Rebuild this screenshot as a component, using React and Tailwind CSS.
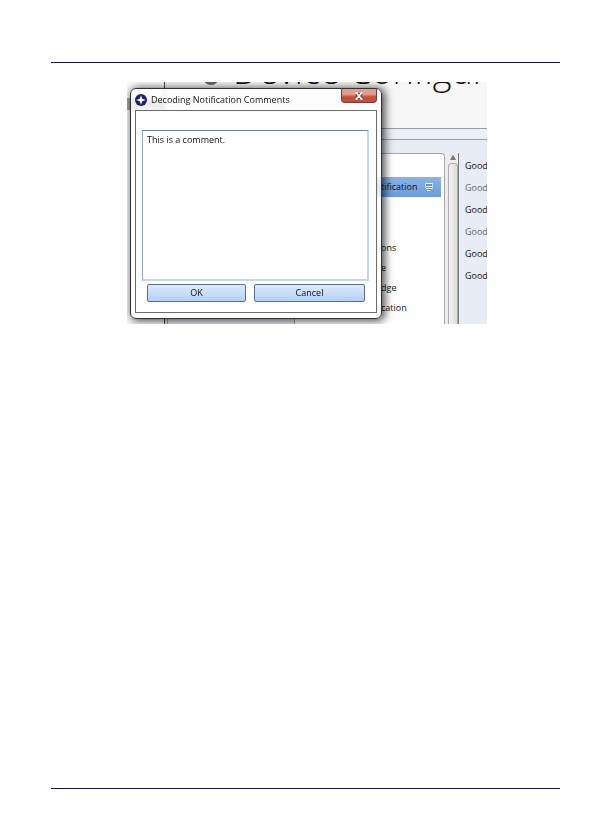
import React, { useState } from 'react';

const menuItems = [
    { head: 'i', tail: 'ons' },
    { head: 'c', tail: 'e' },
    { head: 'i', tail: 'dge' },
    { head: 'fi', tail: 'cation' },
];

const reads = [
    { label: 'Good' },
    { label: 'Good', dim: true },
    { label: 'Good' },
    { label: 'Good', dim: true },
    { label: 'Good' },
    { label: 'Good' },
];

const Emblem = () => (
    <svg viewBox="0 0 12 12" className="size-3 shrink-0" aria-hidden="true">
        <circle cx="6" cy="6" r="6" fill="#1c2268" />
        <path d="M6 1.2 L7.2 4.8 L10.8 6 L7.2 7.2 L6 10.8 L4.8 7.2 L1.2 6 L4.8 4.8 Z" fill="#fff" />
    </svg>
);

const CloseIcon = () => (
    <svg viewBox="0 0 10 8" className="w-[10px] h-2" aria-hidden="true">
        <path d="M2.5 1.5 L7.5 6.5 M7.5 1.5 L2.5 6.5" stroke="#6b3a38" strokeWidth="3.2" />
        <path d="M1.5 1 H3.8 M6.2 1 H8.5 M1.5 7 H3.8 M6.2 7 H8.5 M2.6 1.2 L7.4 6.8 M7.4 1.2 L2.6 6.8" stroke="#fff" strokeWidth="1.5" />
    </svg>
);

const NoteIcon = () => (
    <svg viewBox="0 0 10 8" className="w-[10px] h-2" aria-hidden="true">
        <path d="M1 .5 H9 V5.5 H7.5 V7.5 H3 L1 5.5 Z" fill="#5f93d6" />
        <path d="M1 .5 H9 M2 3.5 H8 M2 5.5 H8 M3 7.5 H6.5" stroke="#f2f8ff" strokeWidth="1" />
        <path d="M1.5 .5 V5 M8.5 .5 V6" stroke="#bcd6f5" strokeWidth="1" />
    </svg>
);

// The application window that sits behind the dialog
const DeviceWindow = () => (
    <div className="flex h-full">
        <div className="w-[37px] shrink-0 bg-[#fafafa] pt-4">
            <div className="h-3 bg-[#a5a5a5]" />
        </div>
        <div className="flex-1 min-w-0 flex flex-col border-l border-[#444] bg-[#e8ecf4]">
            <header className="h-[47px] shrink-0 bg-[#f6f6f6] border-b border-[#9a9da3]">
                <div className="flex -mt-[29px] pl-[38px] gap-[14px] whitespace-nowrap">
                    <div className="size-4 shrink-0 mt-4 rounded-full bg-[#666]" />
                    <h1 className="text-[36px] leading-9 font-light text-[#111]">Device Configuration</h1>
                </div>
            </header>
            <div className="h-[10px] shrink-0 bg-[#eceff4]" />
            <div className="flex-1 flex ml-[2px] border-t border-l border-[#9a9da3]">
                <div className="w-[126px] shrink-0 mt-[13px]" />
                <nav className="w-[151px] shrink-0 mt-[13px] pt-[23px] pr-[3px] bg-white border-t border-x border-[#a3a6ab] rounded-t">
                    <div className="flex items-center h-5 bg-gradient-to-b from-[#8bb3e6] to-[#6d9cd9]">
                        <span className="w-[86px] text-right">No</span>
                        <span className="flex-1">tification</span>
                        <span className="mr-[7px]"><NoteIcon /></span>
                    </div>
                    <ul className="pt-[41px]">
                        {menuItems.map((item) => (
                            <li key={item.tail} className="flex items-center h-5">
                                <span className="w-[86px] text-right">{item.head}</span>
                                <span>{item.tail}</span>
                            </li>
                        ))}
                    </ul>
                </nav>
                <div className="w-[14px] shrink-0 mt-[13px] flex flex-col bg-[#ededed] border-r border-[#77797d] pl-[3px]">
                    <svg viewBox="0 0 10 10" className="size-[10px]" aria-hidden="true">
                        <path d="M5 1.5 L8 7 H2 Z" fill="#777" />
                    </svg>
                    <div className="flex-1 border-t border-x border-[#aaa] rounded-t-sm bg-gradient-to-r from-[#f4f4f4] to-[#dcdcdc]" />
                </div>
                <ul className="flex-1 min-w-0 mt-[15px] pl-[6px] overflow-hidden">
                    {reads.map((read, i) => (
                        <li key={i} className={`h-[22px] leading-[22px] ${read.dim ? 'text-[#666]' : 'text-[#111]'}`}>
                            {read.label}
                        </li>
                    ))}
                </ul>
            </div>
        </div>
    </div>
);

const buttonStyle = 'h-[18px] flex items-center justify-center rounded-xs border border-[#5d6f90] bg-linear-to-b from-[#dbe9fb] via-[#c9def8] via-50% to-[#b3cff4]';

const CommentDialog = () => {
    const [comment, setComment] = useState('This is a comment.');

    return (
        <div
            role="dialog"
            aria-labelledby="dialog-title"
            className="absolute left-[3px] top-[6px] w-[252px] px-1 pb-[5px] rounded-md border border-[#333] bg-white/80 backdrop-blur-[2px] shadow-[2px_1px_9px_1px_rgba(0,0,0,0.7)]"
        >
            <div className="flex h-[21px]">
                <div className="flex-1 flex items-center gap-1">
                    <Emblem />
                    <h2 id="dialog-title">Decoding Notification Comments</h2>
                </div>
                <button
                    type="button"
                    aria-label="Close"
                    className="w-9 h-[14px] flex items-center justify-center rounded-b-sm border border-t-0 border-[#7a3a36] bg-linear-to-b from-[#e29c90] from-40% to-[#c2503f] to-60%"
                >
                    <CloseIcon />
                </button>
            </div>
            <form className="bg-white border border-[#6c6c6c] pt-[19px] pb-[10px] pl-[6px] pr-[7px]" onSubmit={(e) => e.preventDefault()}>
                <textarea
                    aria-label="Comment"
                    value={comment}
                    onChange={(e) => setComment(e.target.value)}
                    className="block w-full h-[151px] px-1 py-[3px] leading-3 resize-none outline-none bg-white border border-r-2 border-b-2 border-t-[#7480ad] border-l-[#93a5d0] border-r-[#c3d7ef] border-b-[#c3d7ef]"
                />
                <div className="flex gap-2 mt-[3px] pl-[5px] pr-1">
                    <button type="submit" className={`w-[99px] ${buttonStyle}`}>OK</button>
                    <button type="button" className={`flex-1 ${buttonStyle}`}>Cancel</button>
                </div>
            </form>
        </div>
    );
};

const App = () => {
    return (
        <div className="min-h-screen flex flex-col bg-white pl-[51px] pr-[35px] pt-[62px] pb-[50px] font-['Open_Sans',sans-serif] text-[9px] leading-3 text-[#111]">
            <main className="flex-1 border-y border-[#15104f] pt-[19px]">
                <figure className="relative w-[360px] h-[242px] ml-[76px] overflow-hidden">
                    <DeviceWindow />
                    <CommentDialog />
                </figure>
            </main>
        </div>
    );
};

export default App;
